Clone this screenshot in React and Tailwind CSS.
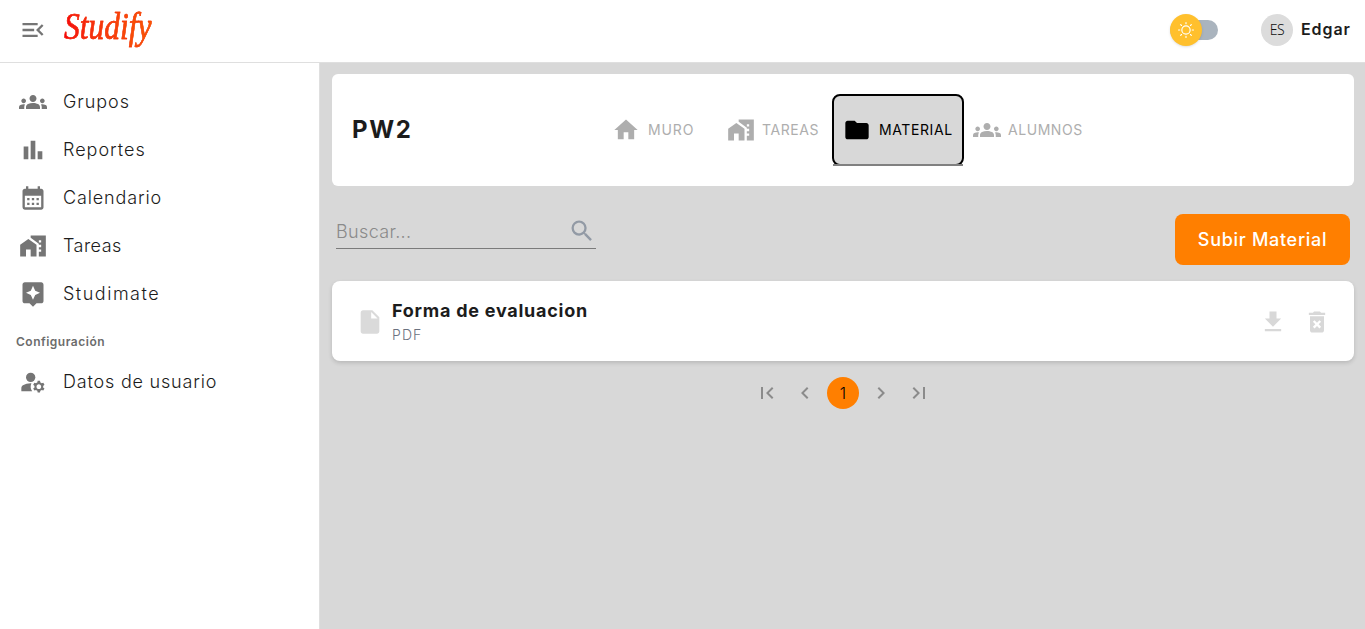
import React from "react";
import {
  MdMenuOpen, MdGroups, MdBarChart, MdCalendarMonth, MdHomeWork, MdAssistant,
  MdManageAccounts, MdHome, MdFolder, MdSearch, MdInsertDriveFile,
  MdDeleteForever, MdFirstPage, MdLastPage, MdChevronLeft, MdChevronRight,
} from "react-icons/md";

const nav = [
  { label: "Grupos", Icon: MdGroups, track: "tracking-[0.95px]" },
  { label: "Reportes", Icon: MdBarChart, track: "tracking-[1px]" },
  { label: "Calendario", Icon: MdCalendarMonth, track: "tracking-[0.85px]" },
  { label: "Tareas", Icon: MdHomeWork, track: "tracking-[0.47px]" },
  { label: "Studimate", Icon: MdAssistant, track: "tracking-[1.5px]" },
];

function NavItem({ label, Icon, track }) {
  return (
    <a className="flex h-12 items-center gap-4 pl-[19px]">
      <Icon className="-ml-[0.5px] mr-[0.5px] size-7 shrink-0 text-[#757575]" />
      <span className={`whitespace-nowrap pb-[2px] text-[18px] font-light text-[#1c1c1c] ${track}`}>{label}</span>
    </a>
  );
}

function SunIcon() {
  return (
    <svg viewBox="0 0 24 24" className="size-5" fill="none" stroke="#fff" strokeWidth="1.4" strokeLinecap="round">
      <circle cx="12" cy="12" r="5" />
      <path d="M12 3V4.5M12 19.5V21M3 12H4.5M19.5 12H21M5.6 5.6l1 1M17.4 17.4l1 1M5.6 18.4l1-1M17.4 6.6l1-1" />
    </svg>
  );
}

function Header() {
  return (
    <header className="flex h-[63px] shrink-0 items-center border-b border-[#dfdfdf] bg-white pb-[2px] pl-[19px] pr-[15px]">
      <MdMenuOpen className="size-7 text-[#757575]" />
      <span className="-mt-2 ml-[17px] w-[108px] origin-left scale-x-[0.83] bg-gradient-to-r from-[#f40010] to-[#f85a00] bg-clip-text font-['Liberation_Serif',cursive] text-[38px] italic leading-[48px] tracking-normal text-transparent [-webkit-text-stroke:0.5px_#f63008]">
        Studify
      </span>
      <div className="ml-auto flex items-center">
        <div className="flex h-5 w-12 items-center rounded-full bg-[#aab4be]">
          <div className="flex size-8 shrink-0 items-center justify-center rounded-full bg-[#ffc02d] shadow-sm">
            <SunIcon />
          </div>
        </div>
        <div className="ml-[43px] flex size-8 items-center justify-center rounded-full bg-[#dcdcdc] font-['Noto_Sans',sans-serif] text-sm font-light tracking-[-0.4px] text-[#111]">
          ES
        </div>
        <span className="ml-2 w-[49px] whitespace-nowrap pb-[2px] text-[16px] font-semibold tracking-[0.9px] text-[#1c1c1c]">Edgar</span>
      </div>
    </header>
  );
}

function Tabs() {
  return (
    <div className="flex items-center text-[14px] text-[#aeaeae]">
      <div className="flex w-[115px] items-center">
        <MdHome className="size-7 shrink-0" />
        <span className="ml-2 pb-[2px] tracking-[0.9px]">MURO</span>
      </div>
      <div className="flex w-[105px] items-center">
        <MdHomeWork className="size-7 shrink-0" />
        <span className="ml-[7px] pb-[2px] tracking-[0.6px]">TAREAS</span>
      </div>
      <div className="relative flex h-[72px] w-[132px] items-center rounded-lg border-2 border-black bg-[#d8d8d8] pl-[9px] text-black">
        <MdFolder className="size-7 shrink-0" />
        <span className="ml-2 pb-[2px] tracking-[0.6px]">MATERIAL</span>
        <span className="absolute inset-x-[-1px] -bottom-[2px] h-[2px] bg-[#808080]" />
      </div>
      <div className="ml-[9px] flex items-center">
        <MdGroups className="size-7 shrink-0" />
        <span className="ml-[7px] pb-[2px] tracking-[0.55px]">ALUMNOS</span>
      </div>
    </div>
  );
}

export default function App() {
  return (
    <div className="flex h-screen flex-col overflow-hidden font-['Inter',sans-serif]">
      <Header />
      <div className="flex min-h-0 flex-1">
        <aside className="w-80 shrink-0 border-r border-[#dfdfdf] bg-white pt-[15px]">
          {nav.map((item) => <NavItem key={item.label} {...item} />)}
          <h2 className="flex h-10 items-center pl-4 pt-2 text-[12px] font-semibold tracking-[0.5px] text-[#6c6c6c]">Configuración</h2>
          <NavItem label="Datos de usuario" Icon={MdManageAccounts} track="tracking-[0.8px]" />
        </aside>
        <main className="flex-1 bg-[#d8d8d8] pl-3 pr-[11px] pt-[11px]">
          <section className="flex h-28 items-center rounded-md bg-white pl-5">
            <h1 className="w-[260px] text-[24px] font-bold tracking-[1.6px] text-[#1c1c1c]">PW2</h1>
            <Tabs />
          </section>
          <div className="flex h-[95px] items-start justify-between pl-1 pr-1 pt-7">
            <div className="flex h-[35px] w-[260px] items-center justify-between border-b border-[#7b7b7b]">
              <span className="text-[18px] font-light tracking-[0.35px] text-[#8a8a8a]">Buscar...</span>
              <MdSearch className="size-7 text-[#929aa5]" />
            </div>
            <button className="h-[51px] w-[175px] rounded-lg bg-[#ff7f00] text-[18px] font-medium tracking-[0.7px] text-white">
              Subir Material
            </button>
          </div>
          <article className="flex h-20 items-center rounded-lg bg-white pl-6 pr-[23px] pt-px shadow-[0_2px_4px_rgba(0,0,0,0.15)]">
            <MdInsertDriveFile className="-ml-[0.5px] mr-[0.5px] size-7 text-[#dadada]" />
            <div className="ml-2 pt-[3px]">
              <h3 className="text-[18px] font-bold leading-6 tracking-[0.75px] text-[#1c1c1c]">Forma de evaluacion</h3>
              <p className="text-[14px] font-light leading-6 tracking-[1.1px] text-[#6b7280]">PDF</p>
            </div>
            <svg viewBox="0 0 24 24" className="ml-auto size-7 fill-[#d8d8d8]">
              <path d="M19 9h-4V3H9v6H5l7 7 7-7zM5 18v2h14v-2H5z" />
            </svg>
            <MdDeleteForever className="ml-4 size-7 text-[#d8d8d8]" />
          </article>
          <nav className="mt-4 flex items-center justify-center gap-[14px] text-[#8b8b8b]">
            <MdFirstPage className="size-6" />
            <MdChevronLeft className="size-6" />
            <span className="-mx-1 flex size-8 items-center justify-center rounded-full bg-[#ff7f00] text-base font-light text-black">1</span>
            <MdChevronRight className="size-6" />
            <MdLastPage className="size-6" />
          </nav>
        </main>
      </div>
    </div>
  );
}
